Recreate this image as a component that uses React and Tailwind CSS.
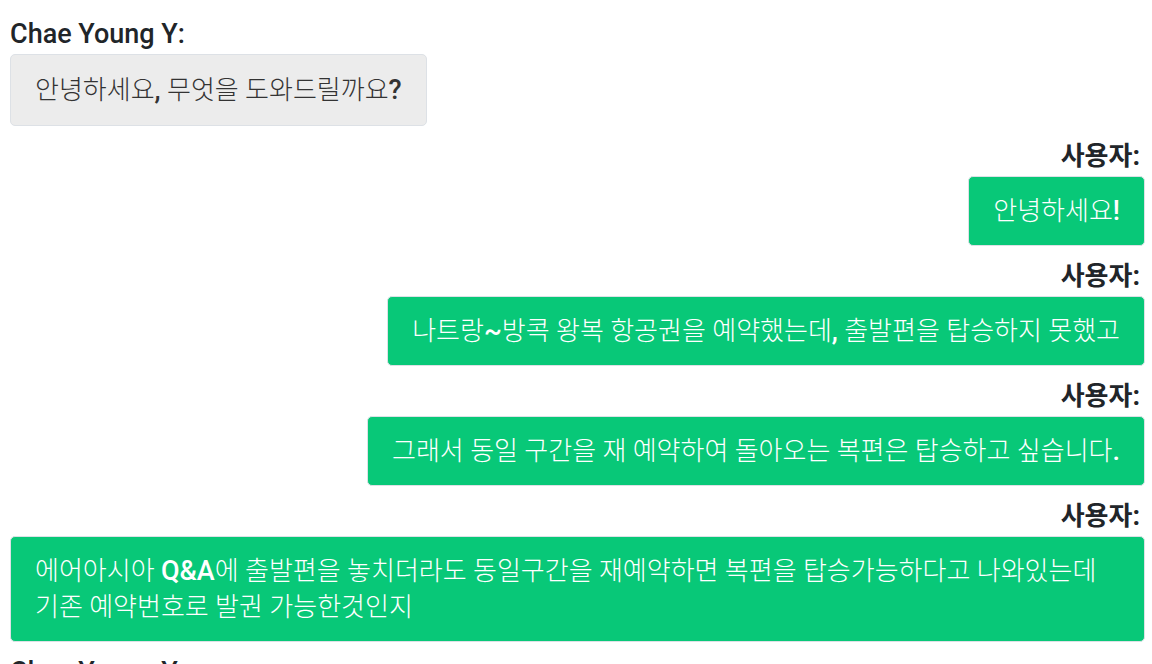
import React from "react";

const messages = [
  { from: "bot", text: "안녕하세요, 무엇을 도와드릴까요?" },
  { from: "user", text: "안녕하세요!" },
  { from: "user", text: "나트랑~방콕 왕복 항공권을 예약했는데, 출발편을 탑승하지 못했고" },
  { from: "user", text: "그래서 동일 구간을 재 예약하여 돌아오는 복편은 탑승하고 싶습니다." },
  {
    from: "user",
    text: "에어아시아 Q&A에 출발편을 놓치더라도 동일구간을 재예약하면 복편을 탑승가능하다고 나와있는데 기존 예약번호로 발권 가능한것인지",
  },
  { from: "bot", text: "확인해 드리겠습니다. 예약번호를 알려주시겠어요?" },
];

// latin runs are set a bit larger / heavier than the hangul, like the original
function renderText(text) {
  return text.split(/([A-Za-z&?!~,.]+)/).map((part, i) =>
    /[A-Za-z&?!~,.]/.test(part) ? (
      <span key={i} className="text-[27px] font-medium">
        {part}
      </span>
    ) : (
      part
    )
  );
}

function Message({ msg }) {
  const isUser = msg.from === "user";
  return (
    <div className={isUser ? "mb-4 flex flex-col items-end" : "mb-4 flex flex-col items-start"}>
      {isUser ? (
        <div className="mb-[6px] pr-[5px] text-[26px] font-bold leading-[28px] text-[#212529]">
          사용자<span className="text-[27px]">:</span>
        </div>
      ) : (
        <div className="mb-[6px] text-[27px] font-medium leading-[28px] text-[#212529]">Chae Young Y:</div>
      )}
      <div
        className={
          isUser
            ? "max-w-full rounded-[5px] border border-[#dde1e6] bg-[#08c878] px-6 py-4 text-[26px] font-light leading-[36px] text-white"
            : "max-w-full rounded-[5px] border border-[#dde1e6] bg-[#ececec] px-6 py-[17px] text-[26px] font-light leading-[36px] text-[#333]"
        }
      >
        {renderText(msg.text)}
      </div>
    </div>
  );
}

export default function App() {
  return (
    <div className="min-h-screen bg-white pt-[20px] pl-[10px] pr-[7px] font-[Roboto,'Noto_Sans_CJK_KR',sans-serif]">
      {messages.map((m, i) => (
        <Message key={i} msg={m} />
      ))}
    </div>
  );
}
